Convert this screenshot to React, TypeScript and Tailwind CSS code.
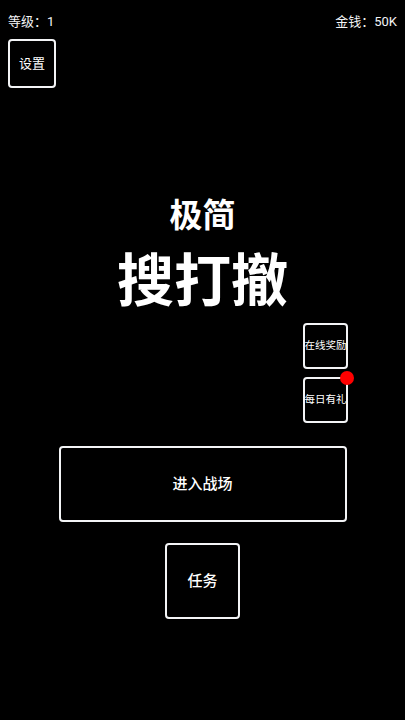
export default function App() {
  return (
    <div
      className="flex h-[720px] w-full flex-col bg-black text-white"
      style={{ fontFamily: 'Roboto, "Noto Sans CJK SC", sans-serif' }}
    >
      <div className="flex items-center justify-between px-2 pt-[13px] text-[13px] leading-[18px] text-gray-100">
        <span>等级：1</span>
        <span>金钱：50K</span>
      </div>

      <div className="ml-2 mt-2 flex h-[49px] w-[48px] items-center justify-center rounded-[4px] border-2 border-gray-100 text-[13px]">
        设置
      </div>

      <div className="mt-[108px] text-center text-[33px] font-bold leading-[40px]">极简</div>
      <div className="mt-[14px] text-center text-[57px] font-bold leading-[64px]">搜打撤</div>

      <div className="mt-[9px] flex flex-col items-end gap-2 pr-[57px]">
        <div className="flex h-[46px] w-[45px] items-center justify-center rounded-[4px] border-2 border-gray-100 text-[10.5px] whitespace-nowrap">
          在线奖励
        </div>
        <div className="relative flex h-[46px] w-[45px] items-center justify-center rounded-[4px] border-2 border-gray-100 text-[10.5px] whitespace-nowrap">
          每日有礼
          <span className="absolute -right-[8px] -top-[8px] h-[14px] w-[14px] rounded-full bg-[#ff0000]" />
        </div>
      </div>

      <div className="mx-auto mt-[23px] flex h-[76px] w-[288px] items-center justify-center rounded-[4px] border-2 border-gray-100 text-[15px] font-medium">
        进入战场
      </div>

      <div className="mx-auto mt-[21px] flex h-[76px] w-[75px] items-center justify-center rounded-[4px] border-2 border-gray-100 text-[15px] font-medium">
        任务
      </div>
    </div>
  );
}
